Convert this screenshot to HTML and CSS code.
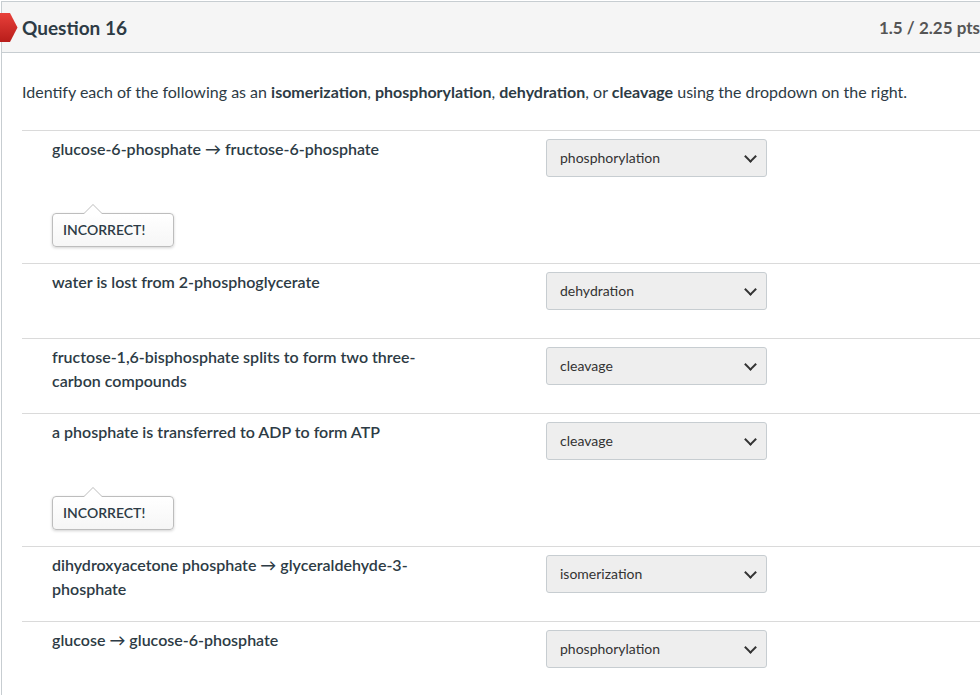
FILE: index.html
```html
<!DOCTYPE html>
<html lang="en">
<head>
  <meta charset="UTF-8" />
  <title>Question 16</title>
  <link rel="stylesheet" href="styles.css">
</head>
<body>
  <div class="question">
    <svg class="flag" width="18" height="30" viewBox="0 0 18 30">
      <defs>
        <linearGradient id="flagFill" x1="0" y1="0" x2="0" y2="1">
          <stop offset="0" stop-color="#e8403a" />
          <stop offset="1" stop-color="#b81d1a" />
        </linearGradient>
      </defs>
      <polygon points="0,0 10,0 17.5,14.5 10,29 0,29" fill="url(#flagFill)" />
    </svg>

    <header class="question-header">
      <div class="question-title">Question 16</div>
      <div class="points">1.5 / 2.25 pts</div>
    </header>

    <div class="question-body">
      <p class="question-text">
        Identify each of the following as an <b>isomerization</b>, <b>phosphorylation</b>, <b>dehydration</b>, or <b>cleavage</b> using the dropdown on the right.
      </p>

      <div class="answers">
        <div class="answer-row">
          <div class="prompt">
            <div>glucose-6-phosphate → fructose-6-phosphate</div>
            <div class="feedback">INCORRECT!</div>
          </div>
          <div class="select">phosphorylation</div>
        </div>

        <div class="answer-row">
          <div class="prompt">
            <div>water is lost from 2-phosphoglycerate</div>
          </div>
          <div class="select">dehydration</div>
        </div>

        <div class="answer-row">
          <div class="prompt">
            <div>fructose-1,6-bisphosphate splits to form two three-carbon compounds</div>
          </div>
          <div class="select">cleavage</div>
        </div>

        <div class="answer-row">
          <div class="prompt">
            <div>a phosphate is transferred to ADP to form ATP</div>
            <div class="feedback">INCORRECT!</div>
          </div>
          <div class="select">cleavage</div>
        </div>

        <div class="answer-row">
          <div class="prompt">
            <div>dihydroxyacetone phosphate → glyceraldehyde-3-phosphate</div>
          </div>
          <div class="select">isomerization</div>
        </div>

        <div class="answer-row">
          <div class="prompt">
            <div>glucose → glucose-6-phosphate</div>
          </div>
          <div class="select">phosphorylation</div>
        </div>
      </div>
    </div>
  </div>
</body>
</html>
```

FILE: styles.css
```css
html {
  overflow: hidden;
}

body {
  margin: 0;
  font-family: Lato, "Helvetica Neue", Arial, sans-serif;
  color: #2d3b45;
  background: #fff;
}

.question {
  position: relative;
  width: 1020px;
  margin: 1px 0 0 1px;
  border-top: 1px solid #c7cdd1;
  border-left: 1px solid #c7cdd1;
}

.flag {
  position: absolute;
  left: -2px;
  top: 11px;
}

.question-header {
  display: flex;
  align-items: center;
  height: 50px;
  padding: 0 20px;
  background: #f5f5f5;
  border-bottom: 1px solid #c7cdd1;
}

.question-title {
  font-size: 19px;
  font-weight: bold;
}

.points {
  margin-left: auto;
  margin-right: 22px;
  font-size: 17px;
  font-weight: bold;
  color: #555;
}

.question-body {
  padding: 27px 0 0 20px;
}

.question-text {
  margin: 0 0 26px;
  font-size: 16px;
  line-height: 24px;
}

.answers {
  font-size: 16px;
  line-height: 24px;
  font-weight: 600;
}

.answer-row {
  display: flex;
  gap: 94px;
  align-items: flex-start;
  padding: 8px 0 16px 30px;
  border-top: 1px solid #dadada;
}

.prompt {
  width: 400px;
  margin-top: -2px;
}

.feedback {
  position: relative;
  display: inline-block;
  margin-top: 52px;
  padding: 0 28px 0 10px;
  line-height: 32px;
  font-size: 14px;
  font-weight: 600;
  border: 1px solid #bdbdbd;
  border-radius: 4px;
  background: linear-gradient(#fff, #f6f6f6);
  box-shadow: 0 1px 3px rgba(0, 0, 0, 0.18);
}

.feedback::before,
.feedback::after {
  content: "";
  position: absolute;
  left: 30px;
  border: 10px solid transparent;
  border-top: 0;
}

.feedback::before {
  top: -10px;
  border-bottom-color: #bdbdbd;
}

.feedback::after {
  top: -9px;
  border-bottom-color: #fff;
}

.select {
  position: relative;
  width: 206px;
  height: 36px;
  margin-bottom: 12px;
  padding-left: 13px;
  font-size: 14px;
  font-weight: normal;
  line-height: 36px;
  color: #333;
  background: #eee;
  border: 1px solid #c7cdd1;
  border-radius: 3px;
}

.select::after {
  content: "";
  position: absolute;
  right: 11px;
  top: 12px;
  width: 7px;
  height: 7px;
  border-right: 2.5px solid #333;
  border-bottom: 2.5px solid #333;
  transform: rotate(45deg);
}
```
